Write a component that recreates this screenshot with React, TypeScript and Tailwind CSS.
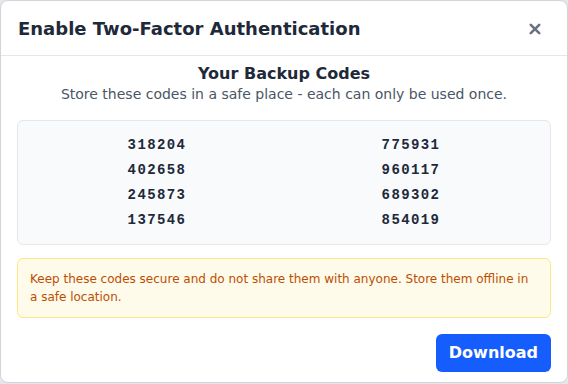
const codes = [
  ["318204", "775931"],
  ["402658", "960117"],
  ["245873", "689302"],
  ["137546", "854019"],
];

export default function App() {
  return (
    <div className="h-[384px] w-[568px] bg-gray-200 font-['DejaVu_Sans',sans-serif]">
      <div className="flex h-[383px] w-[568px] flex-col rounded-lg border border-gray-300 bg-white">
        <header className="flex h-[55px] items-center justify-between border-b border-gray-200 pl-[17px] pr-[24px] pt-[2px]">
          <h2 className="text-lg font-bold text-gray-800">Enable Two-Factor Authentication</h2>
          <button className="flex h-4 w-4 items-center justify-center text-gray-500" aria-label="Close">
            <svg width="12" height="12" viewBox="0 0 12 12" fill="none" stroke="currentColor" strokeWidth="2.6" strokeLinecap="round">
              <path d="M1.8 1.8l8.4 8.4M10.2 1.8l-8.4 8.4" />
            </svg>
          </button>
        </header>

        <div className="flex flex-col px-4 pt-2">
          <h3 className="text-center text-base font-bold leading-5 text-gray-800">Your Backup Codes</h3>
          <p className="text-center text-sm leading-5 text-gray-600">
            Store these codes in a safe place - each can only be used once.
          </p>

          <div className="mt-4 grid grid-cols-2 gap-x-4 gap-y-[9px] rounded-md border border-gray-200 bg-slate-50 px-5 py-4">
            {codes.flat().map((code) => (
              <span
                key={code}
                className="text-center font-['Liberation_Mono',monospace] text-sm font-bold leading-4 tracking-widest text-gray-800"
              >
                {code}
              </span>
            ))}
          </div>

          <div className="mt-[13px] rounded-md border border-amber-200 bg-amber-50 px-3 py-[11px] text-xs leading-[18px] text-amber-700">
            Keep these codes secure and do not share them with anyone. Store them offline in a safe location.
          </div>

          <div className="mt-4 flex justify-end">
            <button className="rounded-md bg-blue-600 px-[13px] py-[7px] text-base font-bold leading-6 text-white">
              Download
            </button>
          </div>
        </div>
      </div>
    </div>
  );
}
